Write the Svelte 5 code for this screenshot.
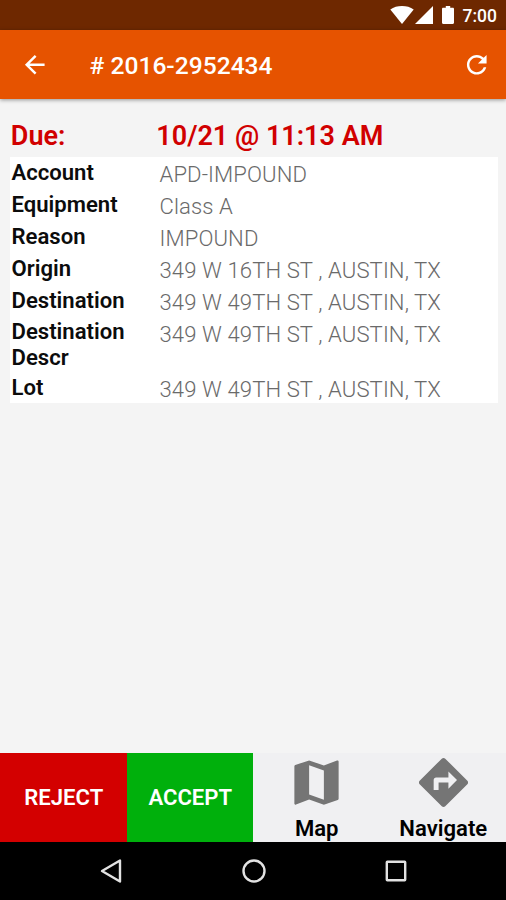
<script lang="ts">
	interface Detail {
		label: string;
		value: string;
	}

	const orderNumber: string = '# 2016-2952434';
	const due: string = '10/21 @ 11:13 AM';

	const details: Detail[] = [
		{ label: 'Account', value: 'APD-IMPOUND' },
		{ label: 'Equipment', value: 'Class A' },
		{ label: 'Reason', value: 'IMPOUND' },
		{ label: 'Origin', value: '349 W 16TH ST , AUSTIN, TX' },
		{ label: 'Destination', value: '349 W 49TH ST , AUSTIN, TX' },
		{ label: 'Destination Descr', value: '349 W 49TH ST , AUSTIN, TX' },
		{ label: 'Lot', value: '349 W 49TH ST , AUSTIN, TX' }
	];
</script>

{#snippet icon(path: string, size: number)}
	<svg width={size} height={size} viewBox="0 0 24 24" fill="currentColor" aria-hidden="true">
		<path d={path} />
	</svg>
{/snippet}

<div class="screen">
	<div class="status-bar">
		<svg class="wifi" width="24" height="18" viewBox="0 0 24 18" aria-hidden="true">
			<path d="M12 18L.3 3.4C3.6 1.2 7.6 0 12 0s8.4 1.2 11.7 3.4z" fill="#fff" />
		</svg>
		<svg class="signal" width="18" height="18" viewBox="0 0 18 18" aria-hidden="true">
			<path d="M0 18L18 0v18z" fill="#fff" />
		</svg>
		<svg class="battery" width="12" height="18" viewBox="0 0 12 18" aria-hidden="true">
			<path
				d="M1.2 1.8H3.8V0h4.4v1.8h2.6c.7 0 1.2.5 1.2 1.2v13.8c0 .7-.5 1.2-1.2 1.2H1.2C.5 18 0 17.5 0 16.8V3c0-.7.5-1.2 1.2-1.2z"
				fill="#fff"
			/>
		</svg>
		<span class="clock">7:00</span>
	</div>

	<header class="toolbar">
		<button aria-label="Back">
			{@render icon('M20 11H7.83l5.59-5.59L12 4l-8 8 8 8 1.41-1.41L7.83 13H20v-2z', 29.5)}
		</button>
		<h1>{orderNumber}</h1>
		<button aria-label="Refresh">
			{@render icon(
				'M17.65 6.35C16.2 4.9 14.21 4 12 4c-4.42 0-7.99 3.58-7.99 8s3.57 8 7.99 8c3.73 0 6.84-2.55 7.73-6h-2.08c-.82 2.33-3.04 4-5.65 4-3.31 0-6-2.69-6-6s2.69-6 6-6c1.66 0 3.14.69 4.22 1.78L13 11h7V4l-2.35 2.35z',
				29.5
			)}
		</button>
	</header>

	<main>
		<div class="due">
			<span class="due-label">Due:</span>
			<span>{due}</span>
		</div>
		<div class="details">
			{#each details as d}
				<div class="row">
					<div class="label">{d.label}</div>
					<div class="value">{d.value}</div>
				</div>
			{/each}
		</div>
	</main>

	<div class="actions">
		<button class="action reject">REJECT</button>
		<button class="action accept">ACCEPT</button>
		<button class="action tool">
			{@render icon(
				'M20.5 3l-.16.03L15 5.1 9 3 3.36 4.9c-.21.07-.36.25-.36.48V20.5c0 .28.22.5.5.5l.16-.03L9 18.9l6 2.1 5.64-1.9c.21-.07.36-.25.36-.48V3.5c0-.28-.22-.5-.5-.5zM15 19l-6-2.11V5l6 2.11V19z',
				59
			)}
			<span>Map</span>
		</button>
		<button class="action tool">
			{@render icon(
				'M21.71 11.29l-9-9c-.39-.39-1.02-.39-1.41 0l-9 9c-.39.39-.39 1.02 0 1.41l9 9c.39.39 1.02.39 1.41 0l9-9c.39-.38.39-1.01 0-1.41zM14 14.5V12h-4v3H8v-4c0-.55.45-1 1-1h5V7.5l3.5 3.5-3.5 3.5z',
				59
			)}
			<span>Navigate</span>
		</button>
	</div>

	<nav>
		<svg width="26" height="26" viewBox="0 0 26 26" aria-hidden="true">
			<path d="M21 2.5v21L3 13z" />
		</svg>
		<svg width="26" height="26" viewBox="0 0 26 26" aria-hidden="true">
			<circle cx="13" cy="13" r="10.5" />
		</svg>
		<svg width="26" height="26" viewBox="0 0 26 26" aria-hidden="true">
			<rect x="3.8" y="3.8" width="18.4" height="18.4" rx="0.5" />
		</svg>
	</nav>
</div>

<style>
	:global(body) {
		margin: 0;
	}

	.screen {
		display: flex;
		flex-direction: column;
		width: 506px;
		height: 900px;
		overflow: hidden;
		background: #f4f4f4;
		font-family: Roboto, sans-serif;
	}

	button {
		display: flex;
		margin: 0;
		padding: 0;
		border: 0;
		background: none;
		color: inherit;
		font: inherit;
	}

	svg {
		display: block;
		flex: none;
	}

	.status-bar {
		display: flex;
		flex: none;
		align-items: center;
		justify-content: flex-end;
		box-sizing: border-box;
		height: 29.5px;
		padding-right: 9px;
		background: #6e2800;
		color: #fff;
	}
	.signal {
		margin-left: 1px;
	}
	.battery {
		margin: 0 9px 0 9px;
	}
	.clock {
		font-size: 17.5px;
		font-weight: 500;
		line-height: 29px;
		padding-top: 3px;
	}

	.toolbar {
		display: flex;
		flex: none;
		align-items: center;
		box-sizing: border-box;
		height: 69px;
		padding: 1px 14.5px 0 20px;
		background: #e65300;
		color: #fff;
		box-shadow: 0 1px 4px rgba(0, 0, 0, 0.4);
	}
	h1 {
		flex: 1;
		margin: 0 0 0 40px;
		padding-top: 2px;
		font-size: 24.6px;
		font-weight: 500;
		line-height: 30px;
	}

	main {
		flex: 1;
		padding: 21.5px 8.5px 0 10px;
	}
	.due {
		display: flex;
		height: 36.5px;
		padding-left: 0.8px;
		color: #d10000;
		font-size: 27px;
		font-weight: 600;
		line-height: 32px;
	}
	.due-label {
		width: 145.5px;
	}
	.details {
		background: #fff;
	}
	.row {
		display: flex;
		align-items: flex-start;
		font-size: 22.1px;
		line-height: 25.9px;
	}
	.label {
		width: 128px;
		padding: 3.4px 20px 0.3px 1.5px;
		color: #0c0c0c;
		font-weight: 600;
	}
	.value {
		padding: 5.5px 0 0.5px;
		color: #6a6a6a;
		font-weight: 300;
		letter-spacing: 0.1px;
	}

	.actions {
		display: flex;
		flex: none;
		height: 89px;
		background: #f0f0f2;
	}
	.action {
		flex: 1;
		align-items: center;
		justify-content: center;
		box-sizing: border-box;
		padding-left: 1px;
		font-size: 22.1px;
		font-weight: 600;
	}
	.reject {
		background: #d30000;
		color: #fff;
	}
	.accept {
		background: #00b00c;
		color: #fff;
	}
	.tool {
		flex-direction: column;
		justify-content: flex-start;
		color: #757575;
	}
	.tool span {
		color: #000;
		line-height: 26px;
		margin-top: 3px;
	}

	nav {
		display: flex;
		flex: none;
		align-items: center;
		justify-content: space-between;
		box-sizing: border-box;
		height: 58.5px;
		padding: 0 97px 0 99px;
		background: #000;
	}
	nav svg {
		fill: none;
		stroke: #e2e2e2;
		stroke-width: 2.4;
		stroke-linejoin: round;
	}
</style>
